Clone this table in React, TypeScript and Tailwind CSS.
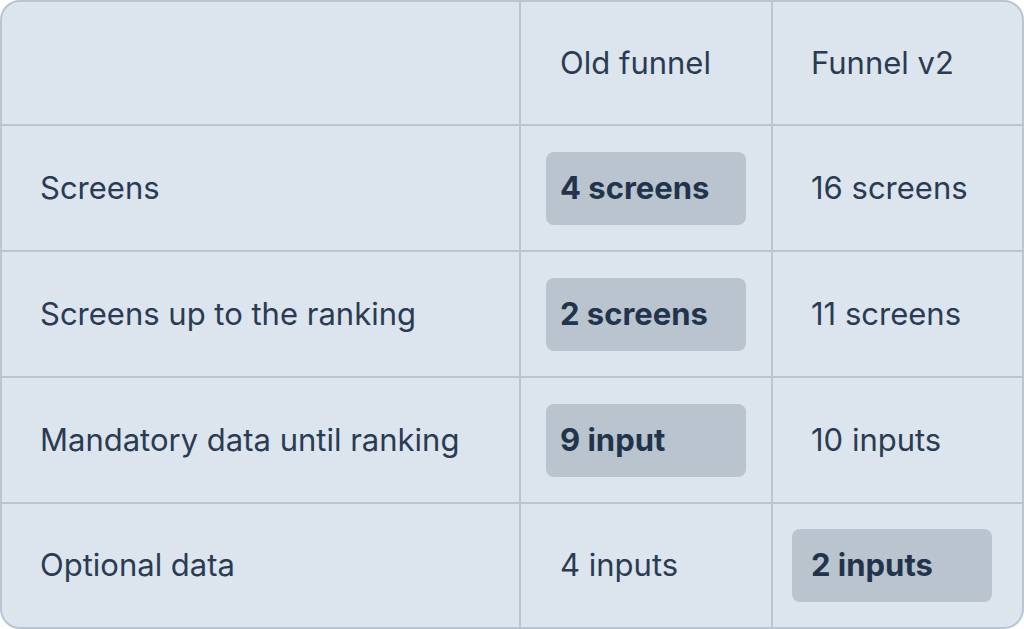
const rows: { label: string; old: string; v2: string; win: "old" | "v2" }[] = [
  { label: "Screens", old: "4 screens", v2: "16 screens", win: "old" },
  { label: "Screens up to the ranking", old: "2 screens", v2: "11 screens", win: "old" },
  { label: "Mandatory data until ranking", old: "9 input", v2: "10 inputs", win: "old" },
  { label: "Optional data", old: "4 inputs", v2: "2 inputs", win: "v2" },
];

function Highlight({ children, pad }: { children: React.ReactNode; pad: string }) {
  return (
    <div className={`flex h-[73px] w-[200px] items-center rounded-[8px] bg-[#b9c4ce] font-bold text-[#22344c] ${pad}`}>
      {children}
    </div>
  );
}

export default function App() {
  return (
    <div className="h-[629px] w-[1024px] bg-white" style={{ fontFamily: "Inter, 'Noto Sans', sans-serif" }}>
      <div className="grid h-full w-full grid-cols-[519px_252px_1fr] grid-rows-[124px_126px_126px_126px_1fr] overflow-hidden rounded-[20px] border-2 border-[#bac5d1] bg-[#dce4ee] text-[31px] text-[#2a3b52]">
        <div className="border-b-2 border-r-2 border-[#bac5d1]" />
        <div className="flex items-center border-b-2 border-r-2 border-[#bac5d1] pl-[39px]">Old funnel</div>
        <div className="flex items-center border-b-2 border-[#bac5d1] pl-[38px]">Funnel v2</div>
        {rows.map((r, i) => {
          const last = i === rows.length - 1;
          const b = last ? "" : "border-b-2";
          return (
            <div key={r.label} className="contents">
              <div className={`flex items-center border-r-2 border-[#bac5d1] pl-[38px] ${b}`}>{r.label}</div>
              <div className={`flex items-center border-r-2 border-[#bac5d1] ${b} ${r.win === "old" ? "pl-[25px]" : "pl-[39px]"}`}>
                {r.win === "old" ? <Highlight pad="pl-[14px]">{r.old}</Highlight> : r.old}
              </div>
              <div className={`flex items-center border-[#bac5d1] ${b} ${r.win === "v2" ? "pl-[19px]" : "pl-[38px]"}`}>
                {r.win === "v2" ? <Highlight pad="pl-[19px]">{r.v2}</Highlight> : r.v2}
              </div>
            </div>
          );
        })}
      </div>
    </div>
  );
}
